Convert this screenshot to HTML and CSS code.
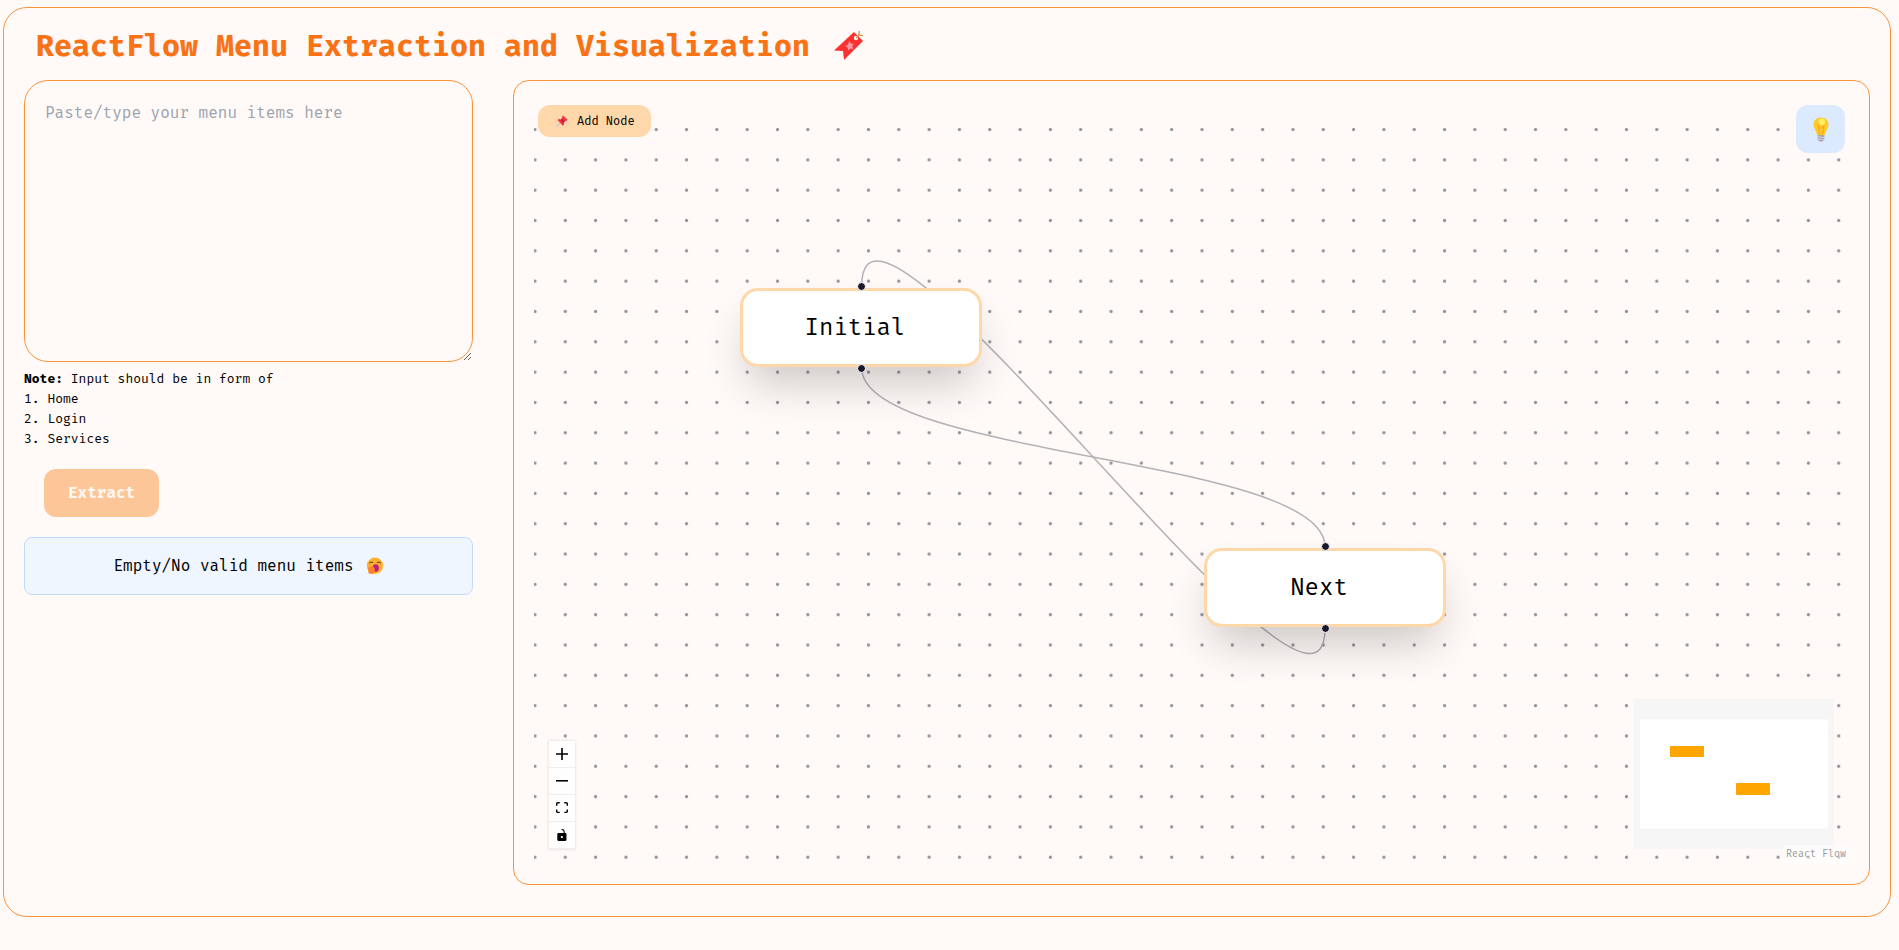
FILE: index.html
```html
<!DOCTYPE html>
<html lang="en">
<head>
<meta charset="utf-8">
<title>ReactFlow Menu Extraction and Visualization</title>
<link rel="stylesheet" href="styles.css">
</head>
<body>
<main class="app">
  <h1 class="title">ReactFlow Menu Extraction and Visualization
    <svg class="title-icon" viewBox="0 0 30 30" aria-hidden="true"><path d="M20 1 29 10 10 29 9 20 0 19.500Z" fill="#fc3030"/><circle cx="22" cy="7" r="2.200" fill="#fffaf7"/><path d="m15.500 10 1.400 2.700 3-.1-1.700 2.500 1.200 2.900-3-.5-2.200 2-.5-3-2.700-1.500 2.800-1.200Z" fill="#fb96a4"/><path d="m22 7 3-3 .3-4M25 4l4 .6" fill="none" stroke="#c98a3c" stroke-width="1.200"/></svg>
  </h1>
  <div class="columns">
    <section class="side">
      <textarea class="input" aria-label="Menu items" placeholder="Paste/type your menu items here"></textarea>
      <div class="note">
        <p><b>Note:</b> Input should be in form of</p>
        <p>1. Home</p>
        <p>2. Login</p>
        <p>3. Services</p>
      </div>
      <button class="extract" type="button" disabled>Extract</button>
      <p class="status">Empty/No valid menu items
        <svg class="status-icon" viewBox="0 0 18 18" aria-hidden="true"><circle cx="9" cy="8.800" r="8.200" fill="#ffb02e"/><path d="M3 6.300q1.500-2 4-.8M11 5.500q2.500-1.200 4 .8" fill="none" stroke="#5c3310" stroke-width="1"/><ellipse cx="9.700" cy="11" rx="3.200" ry="3.800" fill="#bb1d80"/><path d="M2 11.500C2.500 9 7.500 9 8.500 11c.8 1.800 0 3-.5 5-1.500 1.200-4.500 1.200-5.500 0Z" fill="#ff822d"/></svg>
      </p>
    </section>
    <section class="panel">
      <div class="flow">
        <svg class="layer" aria-hidden="true">
          <defs><pattern id="dots" x="-14.200" y="13.400" width="30.320" height="30.320" patternUnits="userSpaceOnUse"><circle cx="15.160" cy="15.160" r="1.600" fill="#91919a"/></pattern></defs>
          <rect width="100%" height="100%" fill="url(#dots)"/>
          <path class="edge" d="M327.700 267C327.700 356 791 356 791 445.500"/>
          <path class="edge" d="M791 527.500C791 687 327.700 25.500 327.700 185"/>
        </svg>
        <div class="node node-initial">Initial<i class="handle top"></i><i class="handle bottom"></i></div>
        <div class="node node-next">Next<i class="handle top"></i><i class="handle bottom"></i></div>
        <button class="add" type="button"><svg class="add-icon" viewBox="0 0 12 12" aria-hidden="true"><path d="M4.500 7.500.2 11.800" stroke="#c9c4cc" stroke-width="1.100"/><path d="m6.500.3 5.200 4.500-1.200 1-1.300.2L8 7.500l.1 2-1.200 1.300L1.500 5l1.100-1 2.200.4 1.400-1.600Z" fill="#f92f40"/><path d="m6 3.500 2.800 2.700-1.600 1.500L4.800 5Z" fill="#bd1850"/></svg>Add Node</button>
        <button class="hint" type="button" aria-label="Toggle theme"><svg class="hint-icon" viewBox="0 0 16 25" aria-hidden="true"><path d="M8 .5C3.500.500.500 3.600.500 7.800.500 11.500 3.300 13 4 18h8c.700-5 3.500-6.500 3.500-10.200C15.500 3.600 12.500.500 8 .500Z" fill="#ffc928"/><path d="m6.500 17.500-1.500-9 3 3 3-3-1.500 9" fill="none" stroke="#f79a18" stroke-width=".8"/><circle cx="8.800" cy="4.800" r="3.200" fill="#ffef62"/><path d="M4.700 18h6.600v4.500L9.500 24.500h-3L4.700 22.500Z" fill="#a9a4ad"/><path d="m4.700 19.800 6.600.9M4.700 22l6.600.9" stroke="#dad5dd" stroke-width=".9"/></svg></button>
        <div class="controls">
          <button class="control" type="button" aria-label="Zoom in"><svg viewBox="0 0 32 32"><path d="M32 18.133H18.133V32h-4.266V18.133H0v-4.266h13.867V0h4.266v13.867H32z"/></svg></button>
          <button class="control" type="button" aria-label="Zoom out"><svg viewBox="0 0 32 5"><path d="M0 0h32v4.200H0z"/></svg></button>
          <button class="control" type="button" aria-label="Fit view"><svg viewBox="0 0 32 30"><path d="M3.692 4.630c0-.530.400-.938.939-.938h5.215V0H4.708C2.130 0 0 2.054 0 4.630v5.216h3.692V4.631zM27.354 0h-5.200v3.692h5.170c.530 0 .984.400.984.939v5.215H32V4.631A4.624 4.624 0 0027.354 0zm.954 24.830c0 .532-.400.940-.939.940h-5.215v3.768h5.215c2.577 0 4.631-2.130 4.631-4.707v-5.139h-3.692v5.139zm-23.677.940c-.531 0-.939-.400-.939-.940v-5.138H0v5.139c0 2.577 2.130 4.707 4.708 4.707h5.138V25.770H4.631z"/></svg></button>
          <button class="control" type="button" aria-label="Toggle interactivity"><svg viewBox="0 0 25 32"><path d="M21.333 10.667H19.810V7.619C19.810 3.429 16.380 0 12.190 0c-4.114 1.828-1.370 2.133.305 2.438 1.676.305 4.420 2.590 4.420 5.181v3.048H3.047A3.056 3.056 0 000 13.714v15.238A3.056 3.056 0 003.048 32h18.285a3.056 3.056 0 003.048-3.048V13.714a3.056 3.056 0 00-3.048-3.047zM12.190 24.533a3.056 3.056 0 01-3.047-3.047 3.056 3.056 0 013.047-3.048 3.056 3.056 0 013.048 3.048 3.056 3.056 0 01-3.048 3.047z"/></svg></button>
        </div>
        <svg class="minimap" viewBox="0 0 200 150" role="img" aria-label="Mini map"><path fill="#f6f6f6" d="M0 0h200v150H0z"/><path fill="#fff" d="M6 20.500h188v109H6z"/><path fill="orange" d="M36 47h34v11H36z"/><rect x="102" y="84" width="34" height="12" rx="1" fill="orange"/></svg>
        <a class="credit" href="#">React Flow</a>
      </div>
    </section>
  </div>
</main>
</body>
</html>
```
FILE: styles.css
```css
* { box-sizing: border-box; }
body {
  margin: 0;
  padding: 7px 8px 32px 3px;
  background: #fffaf7;
  color: #000;
  font-family: "Fira Mono", "Fira Code", "DejaVu Sans Mono", "Liberation Mono", monospace;
  font-size: 16px;
  line-height: 24px;
}
button, textarea { font: inherit; color: inherit; }
p { margin: 0; }
.app {
  display: flex;
  flex-direction: column;
  min-height: calc(100vh - 40px);
  padding: 20px 20px 31px;
  border: 1px solid #fb923c;
  border-radius: 24px;
}
.title {
  display: flex;
  align-items: center;
  gap: 24px;
  margin: 0 0 16px;
  padding-left: 12px;
  font-size: 30px;
  line-height: 36px;
  font-weight: 700;
  color: #f97316;
}
.title-icon { width: 30px; height: 30px; }
.columns {
  flex: 1;
  display: grid;
  grid-template-columns: minmax(0, 449fr) minmax(0, 1357fr);
  gap: 40px;
}
.side { display: flex; flex-direction: column; align-items: flex-start; }
.input {
  display: block;
  width: 100%;
  height: 282px;
  padding: 20px;
  border: 1px solid #fb923c;
  border-radius: 24px;
  background: transparent;
}
.input::placeholder { color: #9ca3af; opacity: 1; }
.note { margin-top: 7px; font-size: 13px; line-height: 20px; }
.extract {
  margin: 20px;
  padding: 12px 24px;
  border: 0;
  border-radius: 12px;
  background: #fdc699;
  color: #fff6f0;
  font-weight: 700;
}
.status {
  display: flex;
  align-items: center;
  justify-content: center;
  gap: 12px;
  width: 100%;
  padding: 16px;
  border: 1px solid #bfdbfe;
  border-radius: 8px;
  background: #eff6ff;
}
.status-icon { width: 18px; height: 18px; }
.panel {
  display: flex;
  padding: 20px;
  border: 1px solid #fb923c;
  border-radius: 16px;
}
.flow { position: relative; flex: 1; overflow: hidden; }
.layer { position: absolute; inset: 0; width: 100%; height: 100%; }
.edge { fill: none; stroke: #b1b1b7; stroke-width: 1.5; }
.node {
  position: absolute;
  display: flex;
  align-items: center;
  justify-content: center;
  width: 242px;
  height: 79px;
  padding: 0 12px 2px 0;
  border: 3px solid #fed7aa;
  border-radius: 18px;
  background: #fff;
  box-shadow: 0 24px 44px -8px rgba(0, 0, 0, 0.2);
  font-size: 24px;
}
.node-initial { left: 206px; top: 187px; }
.node-next { left: 670px; top: 447px; }
.handle {
  position: absolute;
  left: calc(50% - 4px);
  width: 9px;
  height: 9px;
  border: 1px solid #fff;
  border-radius: 50%;
  background: #1a192b;
}
.handle.top { top: -9px; }
.handle.bottom { bottom: -9px; }
.add {
  position: absolute;
  left: 4px;
  top: 4px;
  display: flex;
  align-items: center;
  gap: 9px;
  padding: 4px 16px 4px 18px;
  border: 0;
  border-radius: 12px;
  background: #fed7aa;
  font-size: 12px;
}
.add-icon { width: 12px; height: 12px; }
.hint {
  position: absolute;
  right: 4px;
  top: 4px;
  display: flex;
  align-items: center;
  justify-content: center;
  width: 49px;
  height: 48px;
  padding: 0;
  border: 0;
  border-radius: 12px;
  background: #dbeafe;
}
.hint-icon { width: 16px; height: 25px; }
.controls {
  position: absolute;
  left: 15px;
  bottom: 15px;
  box-shadow: 0 0 2px 1px rgba(0, 0, 0, 0.08);
}
.control {
  display: flex;
  align-items: center;
  justify-content: center;
  width: 26px;
  height: 27px;
  padding: 0;
  border: 0;
  border-bottom: 1px solid #eee;
  background: #fefefe;
}
.control svg { width: 12px; max-height: 12px; }
.minimap { position: absolute; right: 15px; bottom: 15px; width: 200px; height: 150px; }
.credit {
  position: absolute;
  right: 0;
  bottom: 0;
  padding: 2px 3px;
  background: rgba(255, 255, 255, 0.5);
  color: #999;
  font-size: 10px;
  line-height: 15px;
  text-decoration: none;
}
```
